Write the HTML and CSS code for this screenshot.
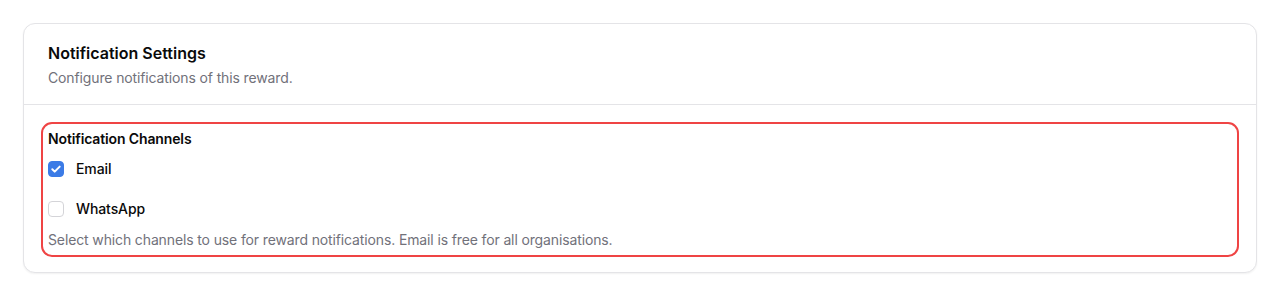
FILE: index.html
```html
<!DOCTYPE html>
<html lang="en">
<head>
<meta charset="utf-8">
<title>Notification Settings</title>
<link rel="stylesheet" href="styles.css">
</head>
<body>
<main class="page">
  <section class="card">
    <header class="card-header">
      <h2 class="card-title">Notification Settings</h2>
      <p class="card-desc">Configure notifications of this reward.</p>
    </header>
    <div class="card-body">
      <div class="field highlight">
        <div class="field-label">Notification Channels</div>
        <div class="options">
          <label class="option">
            <span class="checkbox checked">
              <svg viewBox="0 0 16 16" width="16" height="16" aria-hidden="true"><path d="M4.3 8.3l2.4 2.3 5-5" fill="none" stroke="#fff" stroke-width="2" stroke-linecap="round" stroke-linejoin="round"/></svg>
            </span>
            <span class="option-text">Email</span>
          </label>
          <label class="option">
            <span class="checkbox"></span>
            <span class="option-text">WhatsApp</span>
          </label>
        </div>
        <p class="help">Select which channels to use for reward notifications. Email is free for all organisations.</p>
      </div>
    </div>
  </section>
</main>
</body>
</html>
```
FILE: styles.css
```css
* { box-sizing: border-box; }
html, body { margin: 0; padding: 0; background: #fff; }
body {
  font-family: Inter, "Noto Sans", sans-serif;
  color: #0a0a0a;
  -webkit-font-smoothing: antialiased;
}
.page { padding: 23px; }
.card {
  background: #fff;
  border: 1px solid #e4e4e7;
  border-radius: 12px;
  box-shadow: 0 1px 2px rgba(0,0,0,0.06);
}
.card-header {
  padding: 17px 24px 16px;
  border-bottom: 1px solid #e4e4e7;
}
.card-title {
  margin: 0;
  font-size: 16px;
  line-height: 24px;
  font-weight: 600;
  color: #0a0a0a;
}
.card-desc {
  margin: 3px 0 0;
  font-size: 14px;
  line-height: 20px;
  letter-spacing: -0.13px;
  color: #71717a;
}
.card-body { padding: 24px 24px 22px; }
.highlight {
  outline: 2.5px solid #ef4444;
  outline-offset: 5px;
  border-radius: 4px;
}
.field-label {
  font-size: 14px;
  line-height: 20px;
  font-weight: 600;
  letter-spacing: -0.13px;
  color: #0a0a0a;
}
.options {
  display: flex;
  flex-direction: column;
  gap: 20px;
  margin-top: 10px;
}
.option {
  display: flex;
  align-items: center;
  gap: 12px;
  height: 20px;
}
.checkbox {
  width: 16px;
  height: 16px;
  border: 1px solid #d4d4d8;
  border-radius: 4px;
  background: #fff;
  display: flex;
  align-items: center;
  justify-content: center;
  flex: none;
}
.checkbox.checked {
  background: #3b7be6;
  border-color: #3b7be6;
}
.checkbox svg { display: block; margin: -1px; }
.option-text {
  font-size: 14px;
  line-height: 20px;
  font-weight: 500;
  letter-spacing: -0.1px;
}
.help {
  margin: 11px 0 0;
  font-size: 14px;
  line-height: 20px;
  letter-spacing: -0.13px;
  color: #71717a;
}
```
